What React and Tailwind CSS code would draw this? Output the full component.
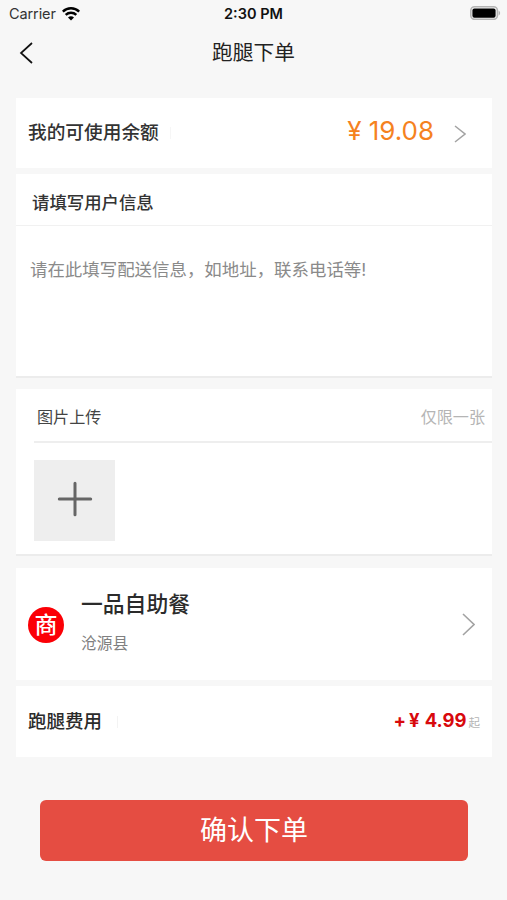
import React, { useState } from 'react';

const CHEVRON = 'shrink-0 fill-none stroke-[#a3a3a3]';

function WifiIcon() {
  return (
    <svg width="18" height="14" viewBox="0 0 18 14" fill="none" stroke="#000" strokeWidth="2.5">
      <path d="M0.8 4.6C5.4 0.2 12.6 0.2 17.2 4.6" />
      <path d="M3.7 7.8C6.7 5 11.3 5 14.3 7.8" />
      <path d="M9 13.4L6 10.4C7.7 8.9 10.3 8.9 12 10.4Z" fill="#000" stroke="none" />
    </svg>
  );
}

function BatteryIcon() {
  return (
    <svg width="31" height="14" viewBox="0 0 31 14" fill="none">
      <rect x="0.8" y="0.8" width="26.6" height="12.6" rx="3.8" stroke="#b4b4b4" strokeWidth="1.6" />
      <rect x="2.4" y="2.4" width="23.2" height="9.4" rx="2" fill="#000" />
      <path d="M28.6 4.8C30.6 5.4 30.6 8.8 28.6 9.4Z" fill="#b4b4b4" />
    </svg>
  );
}

function StatusBar() {
  return (
    <div className="grid h-7 grid-cols-3 items-center pr-[6px] pl-[9px]">
      <div className="flex items-center gap-[6px]">
        <span className="text-[14.5px] tracking-[-0.1px] text-[#333]">Carrier</span>
        <WifiIcon />
      </div>
      <span className="-ml-[3px] text-center text-[14.5px] font-semibold text-[#111]">2:30 PM</span>
      <div className="-mt-[2px] flex justify-end">
        <BatteryIcon />
      </div>
    </div>
  );
}

function NavBar() {
  return (
    <header className="grid h-[50px] grid-cols-[60px_1fr_60px] items-center">
      <button className="pl-[19px]">
        <svg width="15" height="22" viewBox="0 0 15 22" fill="none" stroke="#111" strokeWidth="1.7">
          <path d="M13 1L2 11L13 21" />
        </svg>
      </button>
      <h1 className="text-center text-[20.7px] leading-none text-[#222]">跑腿下单</h1>
    </header>
  );
}

export default function App() {
  const [info, setInfo] = useState('');

  return (
    <div className="h-[900px] w-[507px] overflow-hidden bg-[#f7f7f7] font-['Inter','Noto_Sans_CJK_SC',sans-serif]">
      <StatusBar />
      <NavBar />

      <main className="flex flex-col px-4 pt-5 pr-[15px]">
        {/* Balance */}
        <section className="flex h-[70px] items-center bg-white pl-[12px]">
          <span className="text-[18.7px] font-medium text-[#333]">我的可使用余额</span>
          <i className="ml-[11px] h-3 w-px bg-[#f6f6f6]" />
          <span className="mb-[5px] ml-auto flex items-center text-[26px] text-[#f5821f]">
            <span className="mr-[7px]">¥</span>19.08
          </span>
          <svg width="12" height="18" viewBox="0 0 12 18" strokeWidth="1.5" className={`${CHEVRON} mt-[1px] mr-[26px] ml-5`}>
            <path d="M1 1L11 9L1 17" />
          </svg>
        </section>

        {/* Delivery info */}
        <section className="mt-[6px] h-[204px] border-b-2 border-[#ececec] bg-white">
          <h2 className="flex h-[52px] items-center border-b border-[#f1f1f1] pt-[7px] pl-4 text-[17.4px] font-medium text-[#333]">
            请填写用户信息
          </h2>
          <textarea
            value={info}
            onChange={(e) => setInfo(e.target.value)}
            placeholder="请在此填写配送信息，如地址，联系电话等!"
            className="block h-[148px] w-full resize-none px-[14px] pt-[31px] text-[17.45px] text-[#333] outline-none placeholder:text-[#8a8a8a]"
          />
        </section>

        {/* Upload */}
        <section className="mt-[11px] h-[167px] border-b-2 border-[#ececec] bg-white">
          <div className="ml-[18px] flex h-[54px] items-center justify-between border-b-2 border-[#eee] pt-[5px] pr-[7px] pl-[3px] text-[16.1px]">
            <span className="text-[#444]">图片上传</span>
            <span className="text-[#b5b5b5]">仅限一张</span>
          </div>
          <button className="mt-[17px] ml-[18px] flex h-[81px] w-[81px] items-center justify-center bg-[#eee] pb-[3px]">
            <svg width="36" height="36" viewBox="0 0 36 36" stroke="#666" strokeWidth="3" strokeLinecap="round">
              <path d="M18 2.3V33.7M2.3 18H33.7" />
            </svg>
          </button>
        </section>

        {/* Shop */}
        <section className="mt-3 flex h-[112px] items-center bg-white pr-[17px] pl-[12px]">
          <span className="mt-[2px] flex size-[36px] items-center justify-center rounded-full bg-[#fb0006] text-[23px] leading-none font-medium text-white">
            商
          </span>
          <div className="-mt-[2px] ml-[17px] flex flex-1 flex-col gap-[20px]">
            <span className="text-[21.8px] leading-none font-medium text-[#2b2b2b]">一品自助餐</span>
            <span className="text-[15.8px] leading-none text-[#808080]">沧源县</span>
          </div>
          <svg width="13" height="23" viewBox="0 0 13 23" strokeWidth="1.6" className={CHEVRON}>
            <path d="M1 1L12 11.5L1 22" />
          </svg>
        </section>

        {/* Fee */}
        <section className="mt-[6px] flex h-[71px] items-center bg-white pr-[12px] pl-[12px]">
          <span className="text-[18.5px] font-medium text-[#2b2b2b]">跑腿费用</span>
          <i className="ml-[15px] h-3 w-px bg-[#f3f3f3]" />
          <span className="mb-[2px] ml-auto flex items-baseline text-[18.5px] font-bold text-[#d8090d]">
            <span>+</span>
            <span className="mr-[5px] ml-[3px]">¥</span>4.99
            <span className="ml-[2px] text-[11.5px] font-normal text-[#b5b5b5]">起</span>
          </span>
        </section>

        <button className="mx-6 mt-[43px] h-[61px] rounded-[6px] bg-[#e54d42] text-[27px] leading-none text-white">
          确认下单
        </button>
      </main>
    </div>
  );
}
